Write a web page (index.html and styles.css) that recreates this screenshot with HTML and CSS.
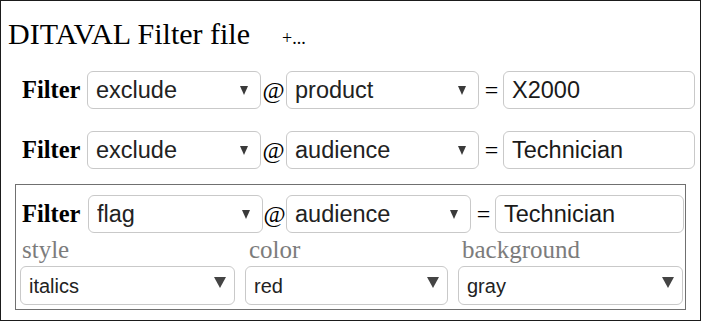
FILE: index.html
```html
<!DOCTYPE html>
<html>
<head>
<meta charset="utf-8">
<link rel="stylesheet" href="styles.css">
</head>
<body>
<div class="frame">
  <h1 class="title">DITAVAL Filter file<span class="add">+...</span></h1>

  <div class="row row-first">
    <span class="flabel">Filter</span>
    <span class="sel w174"><select><option>exclude</option></select></span>
    <span class="op">@</span>
    <span class="sel w193"><select><option>product</option></select></span>
    <span class="op">=</span>
    <input class="val w192" type="text" value="X2000">
  </div>

  <div class="row row-second">
    <span class="flabel">Filter</span>
    <span class="sel w174"><select><option>exclude</option></select></span>
    <span class="op">@</span>
    <span class="sel w193"><select><option>audience</option></select></span>
    <span class="op">=</span>
    <input class="val w192" type="text" value="Technician">
  </div>

  <div class="flagbox">
    <div class="row row-flag">
      <span class="flabel">Filter</span>
      <span class="sel w175"><select><option>flag</option></select></span>
      <span class="op op-narrow">@</span>
      <span class="sel w185"><select><option>audience</option></select></span>
      <span class="op">=</span>
      <input class="val w189" type="text" value="Technician">
    </div>
    <div class="props">
      <div class="prop">
        <div class="plabel">style</div>
        <span class="sel small"><select><option>italics</option></select></span>
      </div>
      <div class="prop">
        <div class="plabel">color</div>
        <span class="sel small"><select><option>red</option></select></span>
      </div>
      <div class="prop">
        <div class="plabel">background</div>
        <span class="sel small"><select><option>gray</option></select></span>
      </div>
    </div>
  </div>
</div>
</body>
</html>
```

FILE: styles.css
```css
html, body {
  margin: 0;
  background: #fff;
}

body {
  font-family: "Liberation Serif", "Times New Roman", serif;
  color: #000;
}

.frame {
  box-sizing: border-box;
  width: 701px;
  height: 321px;
  border: 1px solid #1b1b1b;
  padding: 16px 0 0 7px;
}

.title {
  margin: 0;
  font-weight: normal;
  font-size: 30px;
  line-height: 34px;
  height: 34px;
  display: block;
  white-space: nowrap;
}

.add {
  font-size: 18px;
  line-height: 1;
  margin-left: 32px;
}

.row {
  display: flex;
  align-items: center;
  height: 38px;
}

.row-first {
  margin-top: 20px;
  padding-left: 14px;
}

.row-second {
  margin-top: 22px;
  padding-left: 14px;
}

.flabel {
  font-weight: bold;
  font-size: 24.5px;
  width: 65px;
  flex: none;
}

.op {
  font-size: 24px;
  width: 25px;
  text-align: center;
  flex: none;
}

.op-narrow {
  width: 23px;
}

.row .op + .val {
  margin-left: -1px;
}

.sel {
  position: relative;
  display: block;
  flex: none;
  height: 38px;
}

.sel select {
  -webkit-appearance: none;
  appearance: none;
  box-sizing: border-box;
  width: 100%;
  height: 100%;
  margin: 0;
  border: 1px solid #c9c9c9;
  border-radius: 6px;
  background: #fff;
  padding: 0 0 0 8px;
  font-family: "Liberation Sans", Arial, sans-serif;
  font-size: 23.5px;
  color: #222;
  outline: none;
}

.sel::after {
  content: "";
  position: absolute;
  right: 13px;
  top: 15px;
  width: 0;
  height: 0;
  border-left: 4px solid transparent;
  border-right: 4px solid transparent;
  border-top: 9px solid #3a3a3a;
  pointer-events: none;
}

.val {
  box-sizing: border-box;
  height: 38px;
  margin: 0;
  border: 1px solid #c9c9c9;
  border-radius: 6px;
  padding: 0 0 0 8px;
  font-family: "Liberation Sans", Arial, sans-serif;
  font-size: 23.5px;
  color: #1a1a1a;
  outline: none;
  flex: none;
}

.w174 { width: 174px; }
.w175 { width: 175px; }
.w185 { width: 185px; }
.w189 { width: 189px; }
.w192 { width: 192px; }
.w193 { width: 193px; }

.flagbox {
  box-sizing: border-box;
  width: 671px;
  margin: 15px 0 0 7px;
  border: 1px solid #707070;
  padding: 10px 0 4px 4px;
}

.row-flag {
  padding-left: 2px;
}

.row-flag .flabel {
  width: 66px;
}

.props {
  display: grid;
  grid-template-columns: 215px 203px 225px;
  column-gap: 10px;
}

.plabel {
  font-size: 25px;
  line-height: 33px;
  color: #7c7c7c;
  padding-left: 4px;
}

.prop:first-child .plabel {
  padding-left: 2px;
}

.sel.small {
  height: 39px;
}

.sel.small select {
  font-size: 20px;
}

.sel.small::after {
  right: 9px;
  top: 11px;
  border-left: 6px solid transparent;
  border-right: 6px solid transparent;
  border-top: 11px solid #444;
}
```
